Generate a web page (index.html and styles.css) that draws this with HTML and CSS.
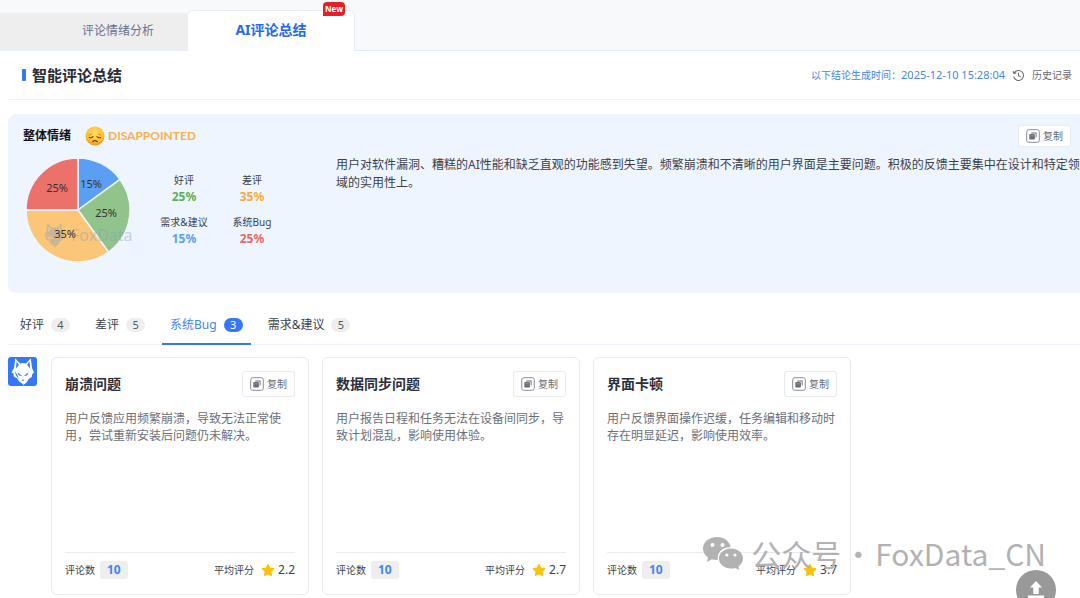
FILE: index.html
```html
<!DOCTYPE html>
<html lang="zh-CN">
<head>
<meta charset="utf-8">
<title>AI评论总结</title>
<link rel="stylesheet" href="styles.css">
</head>
<body>
<svg class="defs" aria-hidden="true">
  <symbol id="copy" viewBox="0 0 14 14">
    <rect x="0.7" y="0.7" width="12.6" height="12.6" rx="2" fill="#fff" stroke="#8a8e97" stroke-width="1"/>
    <path d="M5.200 3.400h5.400v5.200H9.700V4.400H5.200z" fill="#6a6e77"/>
    <rect x="3.300" y="5.100" width="5.600" height="5.400" rx=".8" fill="#6a6e77"/>
    <path d="M4.300 6.800h3.600" stroke="#b0b3ba" stroke-width=".6"/>
  </symbol>
  <symbol id="star" viewBox="0 0 14 14">
    <path d="M7 1.500l1.700 3.600 4 .6-2.900 2.800.7 4L7 10.600l-3.500 1.900.7-4-2.900-2.800 4-.6z" fill="#ffc107" stroke="#ffc107" stroke-width="1.200" stroke-linejoin="round"/>
  </symbol>
  <symbol id="fox" viewBox="0 0 29 29">
    <path fill-rule="evenodd" d="M7.300 1.200L6 11l-2.500 4.500 1.800.8.700 3.400 2.800 1.200 2.200 3.400 3 2.300 1.500.4-1.200 2 4.200-3.400 2.200-3.600 3-2 .6-3 1.700-1.500-2-4.500L22.800 1.200 18 6.500q-3-.9-6 0zM8.600 4.500l2.300 3.300L8 11.500zM21.500 4.500l-2.300 3.300 2.900 3.700zM9.500 15.300l5 4-3.800-1zM20.500 15.300l-5 4 3.800-1zM13.500 22.800h3L15 24.300zM6.500 13.500l1.300 4.300 3 4.700-1.200-4.200z"/>
  </symbol>
</svg>

<nav class="top-tabs">
  <button class="top-tab">评论情绪分析</button>
  <button class="top-tab top-tab-active">AI评论总结<span class="new-badge">New</span></button>
</nav>

<main class="content">
  <header class="title-row">
    <h1 class="title">智能评论总结</h1>
    <div class="meta">
      <span class="time">以下结论生成时间：<time>2025-12-10 15:28:04</time></span>
      <a class="history" href="#history">
        <svg class="history-icon" viewBox="0 0 14 14" fill="none" stroke="#666a73" stroke-width="1.1">
          <path d="M2.300 4.200A5.400 5.400 0 1 1 1.700 8.200M1.200 2.200l.8 2.500 2.600-.5M7 4v3.300l2.400 1"/>
        </svg>
        历史记录
      </a>
    </div>
  </header>

  <section class="summary">
    <div class="mood">
      <div class="mood-head">
        <h2 class="mood-title">整体情绪</h2>
        <svg class="mood-face" viewBox="0 0 20 20">
          <defs>
            <radialGradient id="face" cx=".5" cy=".35" r=".65">
              <stop offset="0" stop-color="#ffe063"/><stop offset=".7" stop-color="#fcbf2e"/><stop offset="1" stop-color="#ec8e1d"/>
            </radialGradient>
          </defs>
          <circle cx="10" cy="10" r="9.500" fill="url(#face)"/>
          <path d="M3.800 9.300l3.400-1.600M16.200 9.300l-3.400-1.600" stroke="#c98022" stroke-width=".8" fill="none"/>
          <path d="M4.300 11.400q2 .9 3.700-.8M15.700 11.400q-2 .9-3.700-.8M7.600 15.700q2.400-2.200 4.800 0" stroke="#6b3a0c" stroke-width="1.100" fill="none" stroke-linecap="round"/>
        </svg>
        <strong class="mood-name">DISAPPOINTED</strong>
      </div>
      <div class="mood-body">
        <svg class="pie" viewBox="0 0 110 106" role="img" aria-label="情绪分布">
          <g stroke="#eef5ff" stroke-width="1.500" stroke-linejoin="round">
            <path d="M55 53V1A52 52 0 0 1 97.070 22.440z" fill="#5a9ff3"/>
            <path d="M55 53L97.070 22.440A52 52 0 0 1 85.560 95.070z" fill="#91c48b"/>
            <path d="M55 53L85.560 95.070A52 52 0 0 1 3 53z" fill="#fcc678"/>
            <path d="M55 53H3A52 52 0 0 1 55 1z" fill="#ed716b"/>
          </g>
          <g fill="#7d9ccb" opacity=".4">
            <use href="#fox" x="18" y="65" width="26" height="26"/>
            <text x="48" y="84" class="pie-mark">FoxData</text>
          </g>
          <g class="pie-labels">
            <text x="68" y="31">15%</text>
            <text x="83" y="60">25%</text>
            <text x="42" y="81">35%</text>
            <text x="34" y="35">25%</text>
          </g>
        </svg>
        <dl class="stats">
          <div class="stat"><dt>好评</dt><dd class="green">25%</dd></div>
          <div class="stat"><dt>差评</dt><dd class="orange">35%</dd></div>
          <div class="stat"><dt>需求&amp;建议</dt><dd class="blue">15%</dd></div>
          <div class="stat"><dt>系统Bug</dt><dd class="red">25%</dd></div>
        </dl>
      </div>
    </div>
    <div class="summary-main">
      <button class="copy-btn copy-small"><svg class="copy-icon"><use href="#copy"/></svg>复制</button>
      <p class="summary-text">用户对软件漏洞、糟糕的AI性能和缺乏直观的功能感到失望。频繁崩溃和不清晰的用户界面是主要问题。积极的反馈主要集中在设计和特定领域的实用性上。</p>
    </div>
  </section>

  <nav class="tabs">
    <button class="tab">好评<span class="count">4</span></button>
    <button class="tab">差评<span class="count">5</span></button>
    <button class="tab tab-active">系统Bug<span class="count">3</span></button>
    <button class="tab">需求&amp;建议<span class="count">5</span></button>
  </nav>

  <section class="results">
    <svg class="logo" viewBox="0 0 29 29" role="img" aria-label="FoxData">
      <rect width="29" height="29" rx="3" fill="#3478f6"/>
      <use href="#fox" width="29" height="29" fill="#fff"/>
    </svg>
    <div class="cards">
      <article class="card">
        <header class="card-head"><h3 class="card-title">崩溃问题</h3><button class="copy-btn"><svg class="copy-icon"><use href="#copy"/></svg>复制</button></header>
        <p class="card-text">用户反馈应用频繁崩溃，导致无法正常使用，尝试重新安装后问题仍未解决。</p>
        <footer class="card-foot"><span>评论数</span><b class="total">10</b><span class="rating">平均评分<svg class="star"><use href="#star"/></svg><span class="score">2.2</span></span></footer>
      </article>
      <article class="card">
        <header class="card-head"><h3 class="card-title">数据同步问题</h3><button class="copy-btn"><svg class="copy-icon"><use href="#copy"/></svg>复制</button></header>
        <p class="card-text">用户报告日程和任务无法在设备间同步，导致计划混乱，影响使用体验。</p>
        <footer class="card-foot"><span>评论数</span><b class="total">10</b><span class="rating">平均评分<svg class="star"><use href="#star"/></svg><span class="score">2.7</span></span></footer>
      </article>
      <article class="card">
        <header class="card-head"><h3 class="card-title">界面卡顿</h3><button class="copy-btn"><svg class="copy-icon"><use href="#copy"/></svg>复制</button></header>
        <p class="card-text">用户反馈界面操作迟缓，任务编辑和移动时存在明显延迟，影响使用效率。</p>
        <footer class="card-foot"><span>评论数</span><b class="total">10</b><span class="rating">平均评分<svg class="star"><use href="#star"/></svg><span class="score">3.7</span></span></footer>
      </article>
    </div>
  </section>
</main>

<div class="watermark">
  <svg class="wechat" viewBox="0 0 42 34" fill="#b2b2b2">
    <path d="M15 1C7 1 1 6 1 12.500c0 4 2 7 5 9L5 26l5-2.800c2 .6 4 .8 6 .6-1.500-7.500 5-13 12.600-12.600C27.500 5 22 1 15 1z"/>
    <path d="M29 12.500c-7 0-12 4.500-12 10s5 10 12 10c1.500 0 3-.2 4.300-.6l4 2-1-3.500c3-2 4.700-4.600 4.700-7.900 0-5.500-5-10-12-10z"/>
    <g fill="#fff"><circle cx="10.500" cy="9" r="2"/><circle cx="20.500" cy="9" r="2"/><circle cx="24.800" cy="19" r="1.600"/><circle cx="33" cy="19" r="1.600"/></g>
  </svg>
  <span class="wm-label">公众号</span><span class="wm-dot">·</span><span>FoxData_CN</span>
</div>
<button class="to-top" aria-label="返回顶部">
  <svg class="to-top-icon" viewBox="0 0 18 18" fill="#fff"><path d="M9 0l6 6.500h-3.300V13H6.300V6.500H3zM1 14.500h16V18H1z"/></svg>
</button>
</body>
</html>
```
FILE: styles.css
```css
* { box-sizing: border-box; margin: 0; padding: 0; }
html, body { min-height: 100vh; }
body {
  position: relative;
  overflow: hidden;
  background: #fff;
  color: #3b3f4a;
  font: 12px/16px "Noto Sans", "Noto Sans CJK SC", sans-serif;
}
button { font: inherit; color: inherit; border: 0; background: none; cursor: pointer; }
a { color: inherit; text-decoration: none; }
.defs { position: absolute; width: 0; height: 0; }

.top-tabs {
  display: flex;
  align-items: flex-end;
  height: 51px;
  background: #f8f9fb;
  border-bottom: 1px solid #e6eefc;
}
.top-tab { height: 37px; width: 187px; padding: 0 0 2px 49px; background: #eee; color: #6b708e; }
.top-tab-active {
  position: relative;
  width: 168px;
  height: 41px;
  margin-bottom: -1px;
  padding: 0 0 3px;
  background: #fff;
  border: 1px solid #e6eefc;
  border-bottom: 0;
  border-radius: 6px 6px 0 0;
  color: #2468f2;
  font-size: 14px;
  font-weight: 700;
}
.new-badge {
  position: absolute;
  top: -9px;
  right: 9px;
  width: 22px;
  border-radius: 4px 4px 4px 0;
  background: #ec1c24;
  color: #fff;
  font-size: 8px;
  line-height: 14px;
}

.content { padding-left: 8px; }
.title-row {
  display: flex;
  align-items: center;
  justify-content: space-between;
  height: 49px;
  padding: 0 8px 0 14px;
  border-bottom: 1px solid #edf3fd;
}
.title { display: flex; align-items: center; gap: 6px; color: #272b37; font-size: 15px; font-weight: 700; }
.title::before { content: ""; width: 4px; height: 12px; border-radius: 1px; background: #3478f6; }
.meta { display: flex; gap: 7px; font-size: 10px; }
.time { color: #4285f4; }
.time time { font-size: 11px; }
.history { display: flex; align-items: center; gap: 7px; color: #666a73; }
.history-icon { width: 13px; height: 13px; }

.summary {
  display: flex;
  min-height: 179px;
  margin-top: 14px;
  border-radius: 8px 0 0 8px;
  background: #eef5ff;
}
.mood { flex: 0 0 328px; padding: 12px 0 0 15px; }
.mood-head { display: flex; align-items: center; height: 20px; }
.mood-title { color: #11131a; font-size: 12px; margin-right: 14px; }
.mood-face { width: 20px; height: 20px; margin-right: 3px; }
.mood-name { color: #f9b04b; font-family: Lato, sans-serif; font-size: 12px; }
.mood-body { display: flex; align-items: flex-start; margin-top: 11px; }
.pie { width: 110px; height: 106px; }
.pie-labels { fill: #333; font-size: 11px; text-anchor: middle; }
.pie-mark { font-size: 16px; }
.stats { display: grid; grid-template-columns: 68px 68px; row-gap: 8px; margin: 15px 0 0 17px; text-align: center; }
.stat dt { font-size: 10px; }
.stat dd { font-size: 12px; font-weight: 700; line-height: 18px; }
.green { color: #5bb055; }
.orange { color: #f7a93e; }
.blue { color: #5a9ff3; }
.red { color: #ed6560; }
.summary-main { display: flex; flex: 1; min-width: 0; flex-direction: column; padding-top: 11px; }
.summary-text { margin-top: 9px; line-height: 18px; }

.copy-btn {
  display: flex;
  align-items: center;
  justify-content: center;
  gap: 3px;
  width: 53px;
  height: 26px;
  border: 1px solid #e9eaec;
  border-radius: 3px;
  background: #fff;
  color: #666a73;
  font-size: 10px;
}
.copy-small { height: 22px; align-self: flex-end; margin-right: 9px; }
.copy-icon { width: 14px; height: 14px; }

.tabs { display: flex; gap: 9px; height: 38px; margin-top: 14px; padding-left: 4px; border-bottom: 1px solid #edf3fd; }
.tab { display: flex; align-items: center; gap: 7px; height: 38px; padding: 0 8px; border-bottom: 2px solid transparent; }
.count { width: 19px; border-radius: 7px; background: #eee; color: #555962; font-size: 11px; line-height: 14px; }
.tab-active { border-color: #3478f6; color: #4285f4; }
.tab-active .count { background: #3478f6; color: #fff; }

.results { display: flex; gap: 14px; margin-top: 12px; }
.logo { flex: none; width: 29px; height: 29px; }
.cards { display: flex; gap: 13px; }
.card { display: flex; flex-direction: column; width: 258px; min-height: 238px; padding: 13px; border: 1px solid #eaebed; border-radius: 6px; }
.card-head { display: flex; align-items: center; justify-content: space-between; }
.card-title { color: #2b2f3b; font-size: 14px; font-weight: 700; }
.card-text { margin-top: 13px; color: #6b6f78; line-height: 17px; }
.card-foot {
  display: flex;
  align-items: center;
  height: 35px;
  margin-top: auto;
  margin-bottom: -6px;
  border-top: 1px solid #eaebed;
  font-size: 10px;
}
.total { margin-left: 5px; padding: 0 7px; border-radius: 3px; background: #eee; color: #4285f4; font-size: 12px; line-height: 18px; }
.rating { display: flex; align-items: center; margin-left: auto; }
.star { width: 14px; height: 14px; margin: 0 3px 0 7px; }
.score { font-size: 12px; }

.watermark {
  position: absolute;
  right: 34px;
  bottom: 23px;
  display: flex;
  align-items: center;
  color: #b2b2b2;
  font: 30px/44px "Noto Sans CJK SC", sans-serif;
  pointer-events: none;
}
.wechat { width: 42px; height: 34px; }
.wm-label { margin-left: 7px; }
.wm-dot { width: 34px; text-align: center; }
.to-top {
  position: absolute;
  right: 24px;
  bottom: -12px;
  display: flex;
  align-items: center;
  justify-content: center;
  width: 40px;
  height: 40px;
  border-radius: 50%;
  background: #999;
}
.to-top-icon { width: 18px; height: 18px; }
```
